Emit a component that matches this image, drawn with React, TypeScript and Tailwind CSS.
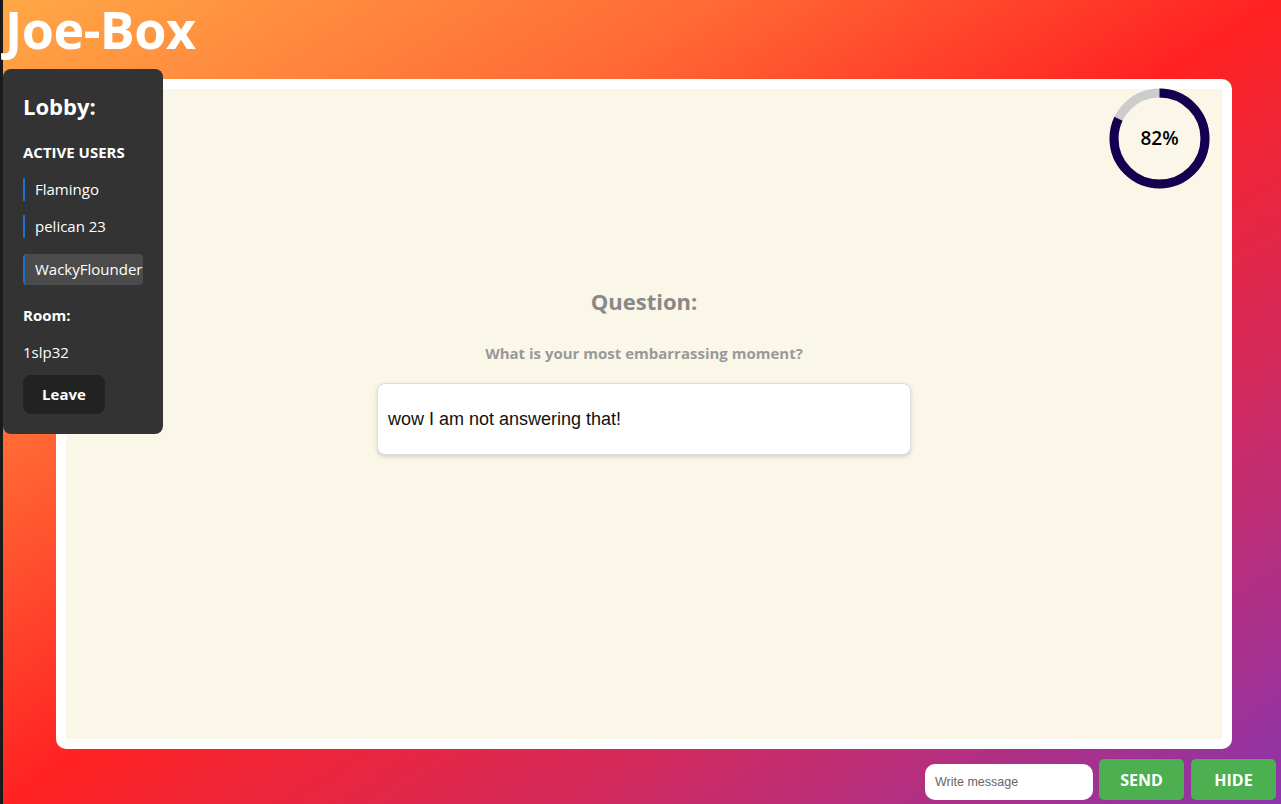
const users = ["Flamingo", "pelican 23", "WackyFlounder"];

function Progress({ value }: { value: number }) {
  const r = 45.5;
  const c = 2 * Math.PI * r;
  return (
    <div className="relative w-[101px] h-[101px]">
      <svg width="101" height="101" viewBox="0 0 101 101" className="-rotate-90">
        <circle cx="50.5" cy="50.5" r={r} fill="none" stroke="#cccccc" strokeWidth="9" />
        <circle
          cx="50.5"
          cy="50.5"
          r={r}
          fill="none"
          stroke="#150050"
          strokeWidth="9"
          strokeDasharray={c}
          strokeDashoffset={c * (1 - value / 100)}
        />
      </svg>
      <div className="absolute inset-0 flex items-center justify-center text-[19px] font-semibold text-black">
        {value}%
      </div>
    </div>
  );
}

function Lobby() {
  return (
    <aside className="absolute left-[3px] top-[69px] w-[160px] h-[365px] rounded-lg bg-[#333333] text-white px-5 pt-[22px]">
      <h2 className="text-[22px] font-bold leading-[30px]">Lobby:</h2>
      <h3 className="mt-[21px] text-[15px] font-bold leading-5">ACTIVE USERS</h3>
      <ul className="mt-[16px] flex flex-col gap-[14px]">
        {users.map((u, i) => (
          <li
            key={u}
            className={
              i === 2
                ? "border-l-2 border-[#1f6fd1] pl-[10px] h-[31px] flex items-center rounded-[4px] bg-[#4b4b4b] text-[15px] whitespace-nowrap overflow-hidden w-[120px] mt-[2px]"
                : "border-l-2 border-[#1f6fd1] pl-[10px] h-[23px] flex items-center text-[15px]"
            }
          >
            {u}
          </li>
        ))}
      </ul>
      <h3 className="mt-[20px] text-[15px] font-bold leading-5">Room:</h3>
      <p className="mt-[17px] text-[15px] leading-5">1slp32</p>
      <button className="mt-[13px] w-[82px] h-[39px] rounded-lg bg-[#222222] text-[15px] font-bold">
        Leave
      </button>
    </aside>
  );
}

export default function App() {
  return (
    <div
      className="relative flex w-full h-[804px] overflow-hidden bg-[linear-gradient(to_bottom_right,#ffa846_0%,#ff6a35_28%,#ff2222_50%,#d42a5c_72%,#8b35ad_100%)]"
      style={{ fontFamily: '"Open Sans", "Noto Sans", sans-serif' }}
    >
      <div className="w-[3px] shrink-0 bg-[#1a1a1a]" />
      <div className="flex-1 flex flex-col">
        <h1 className="h-[79px] text-[52px] font-bold text-white leading-[58px] ml-[2px] tracking-[-0.5px]">
          Joe-Box
        </h1>
        <main className="ml-[53px] w-[1176px] h-[670px] rounded-[10px] bg-white p-[10px] pt-[10px]">
          <div className="relative h-full bg-[#faf7e8] flex flex-col items-center">
            <div className="absolute right-[12px] top-[-1px]">
              <Progress value={82} />
            </div>
            <h2 className="mt-[197px] text-[22px] font-bold text-[#888888] leading-[30px]">Question:</h2>
            <p className="mt-[27px] text-[15px] font-bold text-[#999999] leading-5">
              What is your most embarrassing moment?
            </p>
            <div
              className="mt-[20px] w-[534px] h-[72px] rounded-lg border border-[#dddddd] bg-white shadow-[0_2px_4px_rgba(0,0,0,0.15)] flex items-center px-[10px] text-[18px] text-[#111111]"
              style={{ fontFamily: '"Liberation Sans", Arial, sans-serif' }}
            >
              wow I am not answering that!
            </div>
          </div>
        </main>
        <div className="flex justify-end items-end gap-[6px] pr-[5px] mt-[10px]">
          <input
            placeholder="Write message"
            className="w-[168px] h-[36px] rounded-[10px] bg-white px-[10px] text-[12.5px] text-[#333] placeholder:text-[#666] outline-none mr-[-1px]"
            style={{ fontFamily: '"Liberation Sans", Arial, sans-serif' }}
          />
          <button className="ml-[1px] w-[85px] h-[41px] rounded-[5px] bg-[#4caf50] text-white text-[16px] font-bold">
            SEND
          </button>
          <button className="ml-[1px] w-[85px] h-[41px] rounded-[5px] bg-[#4caf50] text-white text-[16px] font-bold">
            HIDE
          </button>
        </div>
      </div>
      <Lobby />
    </div>
  );
}
